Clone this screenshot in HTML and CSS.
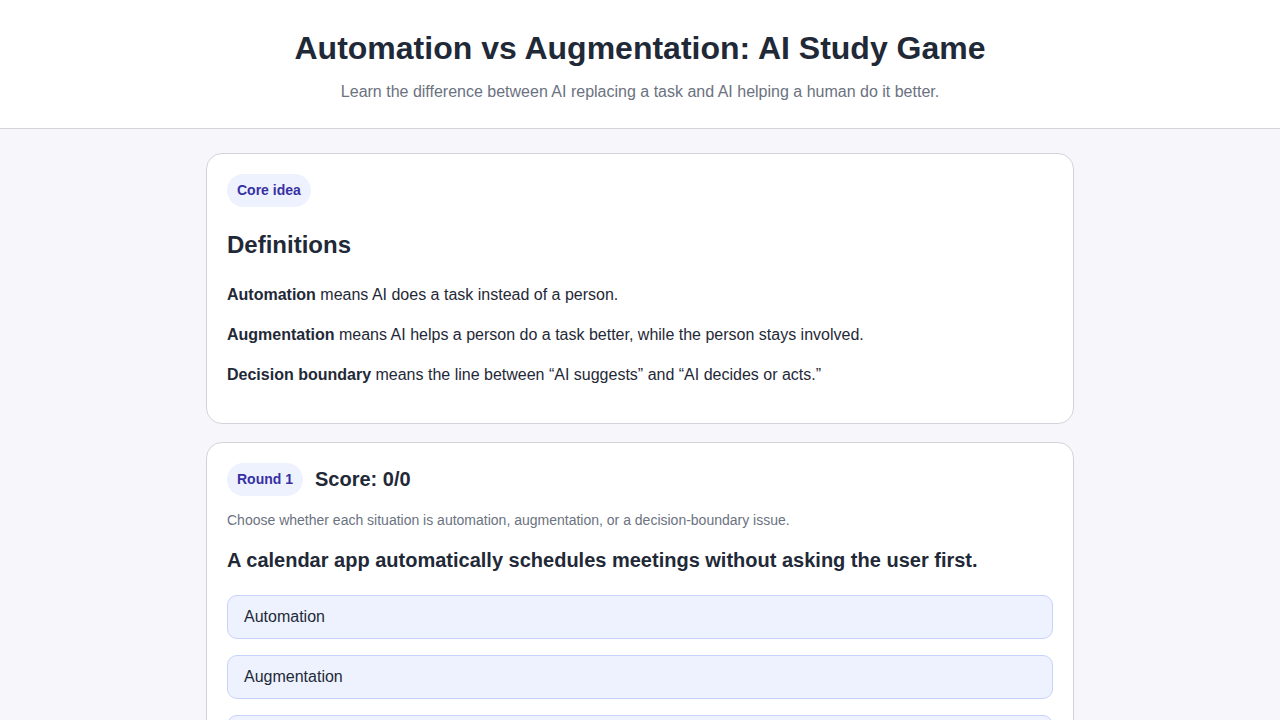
FILE: index.html
```html
<!DOCTYPE html>
<html lang="en">
<head>
    <meta charset="UTF-8">
    <meta name="viewport" content="width=device-width, initial-scale=1.0">
    <title>Automation vs Augmentation: AI Study Game</title>
    <link rel="stylesheet" href="styles.css">
</head>
<body>
    <header class="site-header">
        <h1>Automation vs Augmentation: AI Study Game</h1>
        <p>Learn the difference between AI replacing a task and AI helping a human do it better.</p>
    </header>

    <main class="container">
        <section class="card">
            <span class="badge">Core idea</span>
            <h2>Definitions</h2>
            <p><strong>Automation</strong> means AI does a task instead of a person.</p>
            <p><strong>Augmentation</strong> means AI helps a person do a task better, while the person stays involved.</p>
            <p><strong>Decision boundary</strong> means the line between “AI suggests” and “AI decides or acts.”</p>
        </section>

        <section class="card">
            <div class="round-row">
                <span class="badge">Round 1</span>
                <span class="score">Score: 0/0</span>
            </div>
            <p class="hint">Choose whether each situation is automation, augmentation, or a decision-boundary issue.</p>
            <h3 class="question">A calendar app automatically schedules meetings without asking the user first.</h3>
            <div class="options">
                <button class="option">Automation</button>
                <button class="option">Augmentation</button>
                <button class="option">Decision boundary issue</button>
            </div>
        </section>
    </main>
</body>
</html>
```

FILE: styles.css
```css
* {
    margin: 0;
    padding: 0;
    box-sizing: border-box;
}

body {
    font-family: 'Liberation Sans', Arial, sans-serif;
    background: #f6f6fb;
    color: #1f2937;
}

.site-header {
    background: #ffffff;
    border-bottom: 1px solid #d1d5db;
    text-align: center;
    padding: 29px 20px 24px;
}

.site-header h1 {
    font-size: 32px;
    line-height: 38px;
    font-weight: bold;
}

.site-header p {
    margin-top: 13px;
    font-size: 16px;
    line-height: 24px;
    color: #6b7280;
}

.container {
    max-width: 900px;
    margin: 0 auto;
    padding: 24px 16px;
    display: flex;
    flex-direction: column;
    gap: 18px;
}

.card {
    background: #ffffff;
    border: 1px solid #d1d5db;
    border-radius: 16px;
    padding: 20px;
}

.badge {
    display: inline-block;
    background: #eef2ff;
    color: #3730a3;
    font-size: 14px;
    font-weight: bold;
    line-height: 17px;
    padding: 8px 10px;
    border-radius: 999px;
}

.card h2 {
    font-size: 24px;
    line-height: 30px;
    margin: 23px 0 23px;
}

.card p {
    font-size: 16px;
    line-height: 24px;
    margin-bottom: 16px;
}

.round-row {
    display: flex;
    align-items: center;
    gap: 12px;
}

.score {
    font-size: 20px;
    font-weight: bold;
}

.card .hint {
    font-size: 14px;
    line-height: 21px;
    color: #6b7280;
    margin: 14px 0 16px;
}

.question {
    font-size: 20px;
    line-height: 26px;
    font-weight: bold;
    margin-bottom: 22px;
}

.options {
    display: flex;
    flex-direction: column;
    gap: 16px;
}

.option {
    width: 100%;
    text-align: left;
    font-family: inherit;
    font-size: 16px;
    line-height: 18px;
    color: #1f2937;
    background: #eef2ff;
    border: 1px solid #c7d2fe;
    border-radius: 10px;
    padding: 12px 16px;
    cursor: pointer;
}

.option:hover {
    background: #e0e7ff;
}
```
